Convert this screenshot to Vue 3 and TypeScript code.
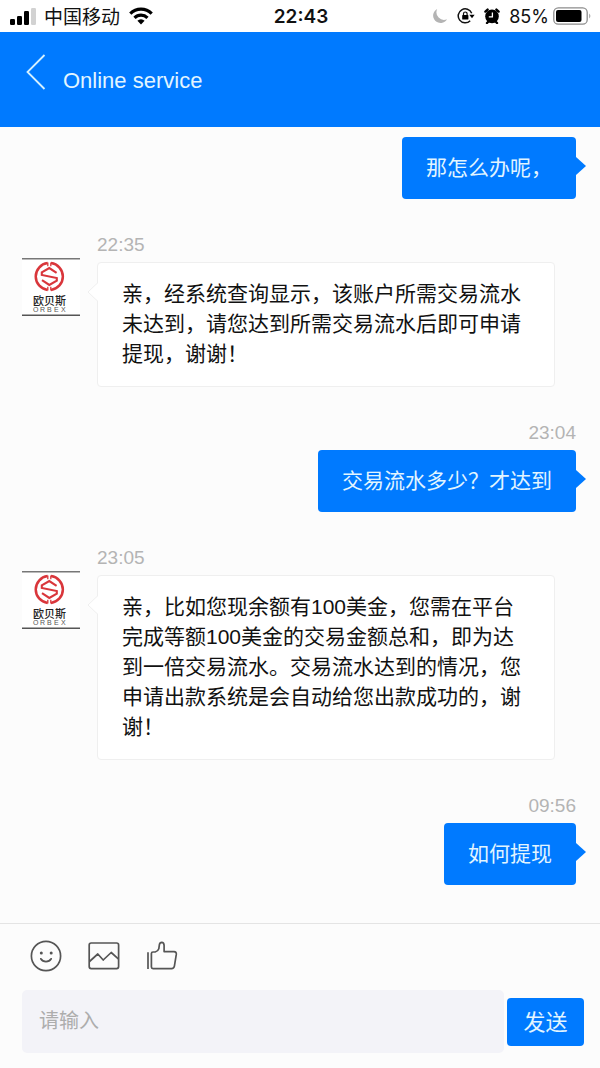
<script setup lang="ts">
import { ref } from 'vue'

interface Message {
  id: number
  from: 'me' | 'agent'
  time?: string
  text: string
}

const messages: Message[] = [
  { id: 1, from: 'me', text: '那怎么办呢，' },
  {
    id: 2,
    from: 'agent',
    time: '22:35',
    text: '亲，经系统查询显示，该账户所需交易流水未达到，请您达到所需交易流水后即可申请提现，谢谢！',
  },
  { id: 3, from: 'me', time: '23:04', text: '交易流水多少？才达到' },
  {
    id: 4,
    from: 'agent',
    time: '23:05',
    text: '亲，比如您现余额有100美金，您需在平台完成等额100美金的交易金额总和，即为达到一倍交易流水。交易流水达到的情况，您申请出款系统是会自动给您出款成功的，谢谢！',
  },
  { id: 5, from: 'me', time: '09:56', text: '如何提现' },
]

const draft = ref('')
</script>

<template>
  <div class="page">
    <div class="status">
      <div class="status-side">
        <svg class="signal" width="26" height="18" viewBox="0 0 26 18" aria-hidden="true">
          <rect x="0" y="12" width="5" height="6" rx="1.2" />
          <rect x="7" y="9" width="5" height="9" rx="1.2" />
          <rect x="14" y="4" width="5" height="14" rx="1.2" />
          <rect x="21" y="1" width="5" height="17" rx="1.2" fill="#d2d2d2" />
        </svg>
        <span class="carrier">中国移动</span>
        <svg class="wifi" width="24" height="18" viewBox="0 0 24 18" aria-hidden="true">
          <g fill="none" stroke="#000" stroke-width="3.2">
            <path d="M1.3 6.6A15.2 15.2 0 0 1 22.7 6.6" />
            <path d="M5.5 10.8A9.3 9.3 0 0 1 18.5 10.8" />
          </g>
          <path d="M8.4 13.8A5 5 0 0 1 15.6 13.8L12 17.6Z" />
        </svg>
      </div>
      <time class="clock">22:43</time>
      <div class="status-side status-right">
        <svg width="16" height="16" viewBox="0 0 16 16" aria-hidden="true">
          <path d="M5.2 1A7.4 7.4 0 1 0 15 11.2A7.6 7.6 0 0 1 5.2 1Z" fill="#b4b4b4" />
        </svg>
        <svg width="18" height="16" viewBox="0 0 18 16" aria-hidden="true">
          <path d="M14.7 5.2A7 7 0 1 0 13.2 12.8" fill="none" stroke="#111" stroke-width="1.5" />
          <path d="M12.3 6.8H17.6L15 10.2Z" />
          <path d="M6.5 7.5V5.8a1.8 1.8 0 0 1 3.6 0v1.7" fill="none" stroke="#111" stroke-width="1.2" />
          <rect x="5.2" y="7" width="6.2" height="4.6" rx=".7" />
        </svg>
        <svg width="16" height="16" viewBox="0 0 16 16" aria-hidden="true">
          <circle cx="8" cy="8.4" r="6.8" />
          <path d="M1.4 3.6 3.6 1.6M14.6 3.6 12.4 1.6M3 15 5 13M13 15 11 13" stroke="#000" stroke-width="2.4" stroke-linecap="round" />
          <path d="M8.4 4.4V8.8H4.8" fill="none" stroke="#fff" stroke-width="1.3" />
        </svg>
        <span class="percent">85%</span>
        <svg class="battery" width="39" height="18" viewBox="0 0 39 18" aria-hidden="true">
          <rect x=".8" y=".8" width="33.4" height="16.4" rx="4.5" fill="none" stroke="#8c8c8c" stroke-width="1.3" />
          <rect x="3" y="3" width="25.5" height="12" rx="2" />
          <path d="M36.3 6.5q2 2.5 0 5z" fill="#8c8c8c" />
        </svg>
      </div>
    </div>

    <header class="header">
      <button class="back" type="button" aria-label="Back">
        <svg width="20" height="36" viewBox="0 0 20 36" aria-hidden="true">
          <path d="M18.5 1 1.5 18 18.5 35" fill="none" stroke="#d5f1ff" stroke-width="1.8" />
        </svg>
      </button>
      <h1 class="title">Online service</h1>
    </header>

    <main class="chat">
      <article v-for="m in messages" :key="m.id" class="message" :class="m.from">
        <svg v-if="m.from === 'agent'" class="avatar" viewBox="0 0 58 58" role="img" aria-label="欧贝斯 ORBEX">
          <rect width="58" height="58" fill="#fff" />
          <path d="M0 .7H58" stroke="#777" stroke-width="1.4" />
          <path d="M0 57.2H58" stroke="#555" stroke-width="1.6" />
          <g fill="none" stroke="#d9363b">
            <path d="M25.6 5.1A13.5 13.5 0 0 0 25.6 31.9M29 5.1A13.5 13.5 0 0 1 29 31.9" stroke-width="2.5" />
            <path d="M25.8 4.5V8.2M28.8 4.5V8.2M25.8 32.5V28.8M28.8 32.5V28.8" stroke-width="1.3" />
            <path d="M34.6 14.8 27.3 10 19.8 14.4V17L34.8 20V22.6L27.3 27 20 22.2" stroke-width="2.1" />
          </g>
          <text class="logo-cn" x="27.5" y="47" text-anchor="middle">欧贝斯</text>
          <text class="logo-en" x="11" y="54">O</text>
          <text class="logo-en" x="18" y="54">R</text>
          <text class="logo-en" x="25" y="54">B</text>
          <text class="logo-en" x="32" y="54">E</text>
          <text class="logo-en" x="39" y="54">X</text>
        </svg>
        <div class="body">
          <time v-if="m.time" class="time">{{ m.time }}</time>
          <p class="bubble">
            {{ m.text }}
            <svg v-if="m.from === 'me'" class="tail" width="10" height="18" viewBox="0 0 10 18" aria-hidden="true">
              <path d="M0 0 10 9 0 18Z" fill="#007aff" />
            </svg>
            <svg v-else class="tail" width="11" height="18" viewBox="0 0 11 18" aria-hidden="true">
              <path d="M11 0 1 9 11 18Z" fill="#fff" />
              <path d="M10.5 0 1 9 10.5 18" fill="none" stroke="#efefef" />
            </svg>
          </p>
        </div>
      </article>
    </main>

    <form class="composer" @submit.prevent="draft = ''">
      <div class="tools">
        <button class="tool" type="button" aria-label="表情">
          <svg width="32" height="32" viewBox="0 0 32 32" aria-hidden="true">
            <circle cx="16" cy="16" r="14.6" />
            <path d="M10.8 18.8Q12.5 21.6 16 21.6T21.2 18.8" stroke-linecap="round" />
            <circle class="dot" cx="11.3" cy="13" r="1.5" />
            <circle class="dot" cx="21.2" cy="13" r="1.5" />
          </svg>
        </button>
        <button class="tool" type="button" aria-label="图片">
          <svg width="32" height="32" viewBox="0 0 32 32" aria-hidden="true">
            <rect x="1.2" y="3" width="29.4" height="25.6" rx="2" />
            <path d="M1.5 21.5 9.8 14 15.2 20 23.2 12.5 30.3 18.8" stroke-linejoin="round" />
          </svg>
        </button>
        <button class="tool" type="button" aria-label="点赞">
          <svg width="32" height="32" viewBox="0 0 32 32" aria-hidden="true">
            <path d="M2 12.2V29" />
            <path d="M5.4 13.5Q5.4 12 7 12H9.2Q12 11.3 12.8 8.8L13.4 4.6Q13.9 2.4 15.7 2.4 18 2.6 18.1 5.4V11.6H28Q30.6 11.8 30.3 14.4L28.4 26.2Q28 28.6 25.6 28.6H7Q5.4 28.6 5.4 27Z" stroke-linejoin="round" />
          </svg>
        </button>
      </div>
      <div class="entry">
        <input v-model="draft" class="field" type="text" placeholder="请输入" aria-label="请输入" />
        <button class="send" type="submit">发送</button>
      </div>
    </form>
  </div>
</template>

<style>
body {
  margin: 0;
  background: #fcfcfc;
}
</style>

<style scoped>
.page {
  display: flex;
  flex-direction: column;
  min-height: 100vh;
  background: #fcfcfc;
  font-family: "Liberation Sans", "Noto Sans CJK SC", sans-serif;
  color: #111;
}

button {
  padding: 0;
  border: 0;
  background: none;
  font-family: inherit;
}

svg {
  display: block;
  flex: none;
}

.status {
  display: grid;
  grid-template-columns: 1fr auto 1fr;
  align-items: center;
  height: 32px;
  padding: 0 8px 0 10px;
  background: #fff;
}

.status-side {
  display: flex;
  align-items: center;
}

.status-right {
  justify-content: flex-end;
  gap: 9px;
}

.carrier {
  padding-top: 3px;
  margin: 0 9px 0 8px;
  font-size: 19px;
  line-height: 24px;
}

.clock {
  font-family: Inter, "Liberation Sans", sans-serif;
  font-size: 19px;
  font-weight: 600;
}

.percent {
  font-family: Inter, "Liberation Sans", sans-serif;
  font-size: 18px;
}

.battery {
  margin-left: -5px;
}

.header {
  display: flex;
  align-items: center;
  gap: 17px;
  height: 95px;
  padding: 0 26px;
  background: #007aff;
}

.back {
  margin-bottom: 16px;
}

.title {
  margin: 2px 0 0;
  color: #e2f5ff;
  font-size: 22px;
  font-weight: 400;
  line-height: 30px;
}

.chat {
  display: flex;
  flex: 1;
  flex-direction: column;
  gap: 34px;
  padding: 10px 24px 34px 22px;
}

.message {
  display: flex;
  align-items: flex-start;
}

.avatar {
  width: 58px;
  height: 58px;
  margin: 25px 17px 0 0;
}

.logo-cn {
  fill: #222;
  font-family: "Noto Sans CJK SC", sans-serif;
  font-size: 11px;
  font-weight: 500;
}

.logo-en {
  fill: #555;
  font-size: 7px;
}

.body {
  display: flex;
  flex-direction: column;
  align-items: flex-start;
  gap: 5px;
  min-width: 0;
}

.time {
  color: #b4b4b4;
  font-size: 19px;
  line-height: 24px;
}

.bubble {
  position: relative;
  margin: 0;
  padding: 16px 24px;
  border-radius: 4px;
  font-size: 21px;
  line-height: 30px;
}

.me {
  justify-content: flex-end;
}

.me .body {
  align-items: flex-end;
}

.me .bubble {
  background: #007aff;
  color: #e2f5ff;
}

.agent .bubble {
  margin-right: 21px;
  padding-bottom: 17px;
  border: 1px solid #efefef;
  background: #fff;
}

.tail {
  position: absolute;
  top: 20px;
}

.me .tail {
  left: 100%;
}

.agent .tail {
  right: 100%;
}

.composer {
  padding: 16px 16px 15px 22px;
  border-top: 1px solid #e4e4e4;
}

.tools {
  display: flex;
  gap: 26px;
  padding: 0 8px 18px;
}

.tool svg {
  fill: none;
  stroke: #555;
  stroke-width: 1.7;
}

.tool .dot {
  fill: #555;
  stroke: none;
}

.entry {
  display: flex;
  align-items: center;
  gap: 3px;
}

.field {
  flex: 1;
  min-width: 0;
  height: 63px;
  box-sizing: border-box;
  padding: 0 17px;
  border: 0;
  border-radius: 5px;
  background: #f3f3f8;
  font-family: inherit;
  font-size: 20px;
}

.field::placeholder {
  color: #adadad;
  opacity: 1;
}

.send {
  width: 77px;
  height: 48px;
  padding-bottom: 4px;
  border-radius: 4px;
  background: #007aff;
  color: #e2f5ff;
  font-size: 22px;
}
</style>
